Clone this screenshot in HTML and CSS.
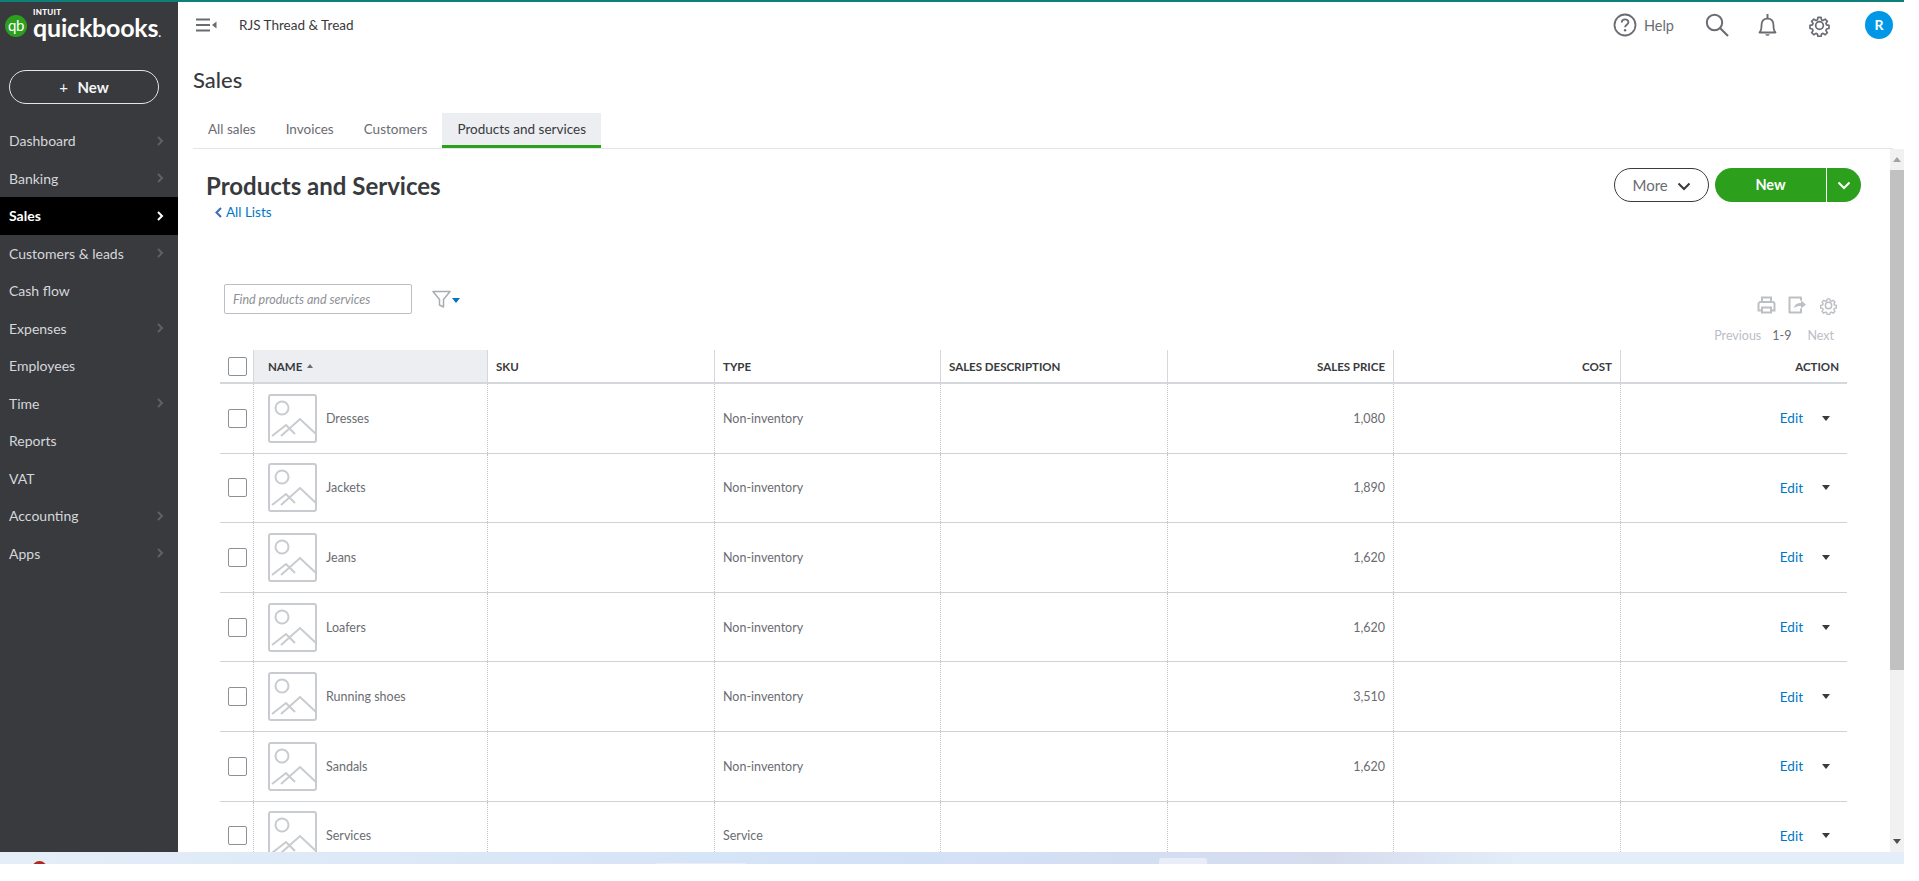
FILE: index.html
```html
<!DOCTYPE html>
<html lang="en">
<head>
    <meta charset="UTF-8">
    <meta name="viewport" content="width=device-width, initial-scale=1.0">
    <title>Products and Services</title>
    <link rel="stylesheet" href="styles.css">
</head>
<body>
    <svg class="defs" width="0" height="0">
        <symbol id="placeholder" viewBox="0 0 49 49">
            <rect x="1" y="1" width="47" height="47" rx="2" fill="none" stroke="#c8cbcf" stroke-width="2"/>
            <circle cx="14" cy="14" r="6.5" fill="none" stroke="#c8cbcf" stroke-width="2"/>
            <path d="M4 42 18 31 27 40M13 42 32 25 48 40" fill="none" stroke="#c8cbcf" stroke-width="2"/>
        </symbol>
        <symbol id="chev" viewBox="0 0 8 12">
            <path d="M2 2l4 4-4 4" fill="none" stroke="currentColor" stroke-width="2"/>
        </symbol>
        <symbol id="down" viewBox="0 0 14 9">
            <path d="M1.5 1.5 7 7l5.500-5.500" fill="none" stroke="currentColor" stroke-width="2"/>
        </symbol>
        <symbol id="gear" viewBox="0 0 24 24">
            <path d="M10 1.500h4l.7 3.200 1.900.8 2.800-1.800 2.800 2.800-1.800 2.800.8 1.900 3.200.7v4l-3.200.7-.8 1.900 1.800 2.800-2.800 2.800-2.800-1.800-1.900.8-.7 3.200h-4l-.7-3.200-1.900-.8-2.800 1.800-2.800-2.800 1.800-2.800-.8-1.900-3.200-.7v-4l3.200-.7.8-1.900-1.800-2.800 2.800-2.800 2.800 1.800 1.900-.8z" transform="translate(2.400 2.400) scale(.8)" fill="none" stroke="currentColor" stroke-width="2.200" stroke-linejoin="round"/>
            <circle cx="12" cy="12" r="4" fill="none" stroke="currentColor" stroke-width="1.800"/>
        </symbol>
    </svg>

    <div class="app">
        <aside class="sidebar">
            <div class="logo">
                <span class="logo-mark">qb</span>
                <div class="logo-text">
                    <span class="logo-intuit">INTUIT</span>
                    <span class="logo-name">quickbooks<small>.</small></span>
                </div>
            </div>
            <button class="new-btn"><span class="plus">+</span> New</button>
            <nav class="nav">
                <a class="nav-item">Dashboard <svg class="nav-chev"><use href="#chev"/></svg></a>
                <a class="nav-item">Banking <svg class="nav-chev"><use href="#chev"/></svg></a>
                <a class="nav-item active">Sales <svg class="nav-chev"><use href="#chev"/></svg></a>
                <a class="nav-item">Customers &amp; leads <svg class="nav-chev"><use href="#chev"/></svg></a>
                <a class="nav-item">Cash flow</a>
                <a class="nav-item">Expenses <svg class="nav-chev"><use href="#chev"/></svg></a>
                <a class="nav-item">Employees</a>
                <a class="nav-item">Time <svg class="nav-chev"><use href="#chev"/></svg></a>
                <a class="nav-item">Reports</a>
                <a class="nav-item">VAT</a>
                <a class="nav-item">Accounting <svg class="nav-chev"><use href="#chev"/></svg></a>
                <a class="nav-item">Apps <svg class="nav-chev"><use href="#chev"/></svg></a>
            </nav>
        </aside>

        <main class="main">
            <header class="topbar">
                <div class="topbar-left">
                    <svg class="menu-icon" width="21" height="14" viewBox="0 0 21 14">
                        <path d="M0 1.500h14M0 7h14M0 12.500h14" stroke="#6b6c72" stroke-width="2"/>
                        <path d="M20.500 3.500v7L16 7z" fill="#6b6c72"/>
                    </svg>
                    <span class="company">RJS Thread &amp; Tread</span>
                </div>
                <div class="topbar-right">
                    <span class="help">
                        <svg width="24" height="24" viewBox="0 0 24 24">
                            <circle cx="12" cy="12" r="10.500" fill="none" stroke="#6b6c72" stroke-width="1.800"/>
                            <path d="M8.800 9.500c0-4.200 6.600-4.200 6.600-.3 0 2.500-3.300 2.600-3.300 5" fill="none" stroke="#6b6c72" stroke-width="1.800"/>
                            <circle cx="12.100" cy="17.300" r="1.200" fill="#6b6c72"/>
                        </svg>
                        Help
                    </span>
                    <svg class="top-icon search" width="24" height="24" viewBox="0 0 24 24">
                        <circle cx="9.500" cy="9.500" r="7.700" fill="none" stroke="#6b6c72" stroke-width="2"/>
                        <path d="M15 15l8 8" stroke="#6b6c72" stroke-width="2.200"/>
                    </svg>
                    <svg class="top-icon bell" width="19" height="24" viewBox="0 0 19 24">
                        <path d="M1.500 19.500c1.800-1.700 2-3.500 2-7 0-4 2-6.800 6-6.800s6 2.800 6 6.800c0 3.500.2 5.300 2 7z" fill="none" stroke="#6b6c72" stroke-width="1.800" stroke-linejoin="round"/>
                        <path d="M9.500 1v4" stroke="#6b6c72" stroke-width="2"/>
                        <path d="M7.300 21.200c.5 2 3.900 2 4.400 0z" fill="#6b6c72"/>
                    </svg>
                    <svg class="top-icon gear" width="23" height="23"><use href="#gear"/></svg>
                    <span class="avatar">R</span>
                </div>
            </header>

            <h1 class="page-title">Sales</h1>

            <div class="tabs">
                <a class="tab">All sales</a>
                <a class="tab">Invoices</a>
                <a class="tab">Customers</a>
                <a class="tab active">Products and services</a>
            </div>

            <div class="content">
                <section class="pane">
                    <div class="list-head">
                        <div>
                            <h2 class="list-title">Products and Services</h2>
                            <a class="back-link"><svg width="7" height="11" viewBox="0 0 7 11"><path d="M6 1 1.500 5.500 6 10" fill="none" stroke="#3f6bb5" stroke-width="2"/></svg> All Lists</a>
                        </div>
                        <div class="head-actions">
                            <button class="more-btn">More <svg width="14" height="9"><use href="#down"/></svg></button>
                            <div class="split-btn">
                                <span class="split-main">New</span>
                                <span class="split-arrow"><svg width="14" height="9"><use href="#down"/></svg></span>
                            </div>
                        </div>
                    </div>

                    <div class="tools">
                        <div class="search-wrap">
                            <input class="search-box" type="text" placeholder="Find products and services">
                            <svg width="19" height="19" viewBox="0 0 19 19">
                                <path d="M1 1.500h17l-6.500 8v7.500l-4-2v-5.500z" fill="none" stroke="#a9adb3" stroke-width="1.500" stroke-linejoin="round"/>
                            </svg>
                            <span class="filter-caret"></span>
                        </div>
                        <div class="tools-right">
                            <div class="tool-icons">
                                <svg width="19" height="18" viewBox="0 0 19 18">
                                    <path d="M5 6V1.500h9V6M4.500 14.500H1.500V8a2 2 0 0 1 2-2h12a2 2 0 0 1 2 2v6.500h-3M5 11.500h9v5H5z" fill="none" stroke="#bcbfc4" stroke-width="2"/>
                                </svg>
                                <svg width="19" height="18" viewBox="0 0 19 18">
                                    <path d="M13 12.500v4H1.500v-15H13v3" fill="none" stroke="#bcbfc4" stroke-width="2" stroke-linejoin="round"/>
                                    <path d="M6 12c.5-3.500 3-5 7-5V4.500l5 4-5 4V10c-3 0-5 .5-7 2z" fill="#bcbfc4"/>
                                </svg>
                                <svg class="tool-gear" width="19" height="19"><use href="#gear"/></svg>
                            </div>
                            <div class="pager">
                                <span>Previous</span>
                                <span class="pager-range">1-9</span>
                                <span>Next</span>
                            </div>
                        </div>
                    </div>

                    <div class="grid">
                        <div class="row head">
                            <div class="cell check"><span class="box"></span></div>
                            <div class="cell sorted">NAME <span class="sort-caret"></span></div>
                            <div class="cell">SKU</div>
                            <div class="cell">TYPE</div>
                            <div class="cell">SALES DESCRIPTION</div>
                            <div class="cell num">SALES PRICE</div>
                            <div class="cell num">COST</div>
                            <div class="cell num">ACTION</div>
                        </div>

                        <div class="row">
                            <div class="cell check"><span class="box"></span></div>
                            <div class="cell name"><svg class="thumb"><use href="#placeholder"/></svg>Dresses</div>
                            <div class="cell"></div>
                            <div class="cell">Non-inventory</div>
                            <div class="cell"></div>
                            <div class="cell num">1,080</div>
                            <div class="cell"></div>
                            <div class="cell action"><a class="edit">Edit</a><span class="row-caret"></span></div>
                        </div>
                        <div class="row">
                            <div class="cell check"><span class="box"></span></div>
                            <div class="cell name"><svg class="thumb"><use href="#placeholder"/></svg>Jackets</div>
                            <div class="cell"></div>
                            <div class="cell">Non-inventory</div>
                            <div class="cell"></div>
                            <div class="cell num">1,890</div>
                            <div class="cell"></div>
                            <div class="cell action"><a class="edit">Edit</a><span class="row-caret"></span></div>
                        </div>
                        <div class="row">
                            <div class="cell check"><span class="box"></span></div>
                            <div class="cell name"><svg class="thumb"><use href="#placeholder"/></svg>Jeans</div>
                            <div class="cell"></div>
                            <div class="cell">Non-inventory</div>
                            <div class="cell"></div>
                            <div class="cell num">1,620</div>
                            <div class="cell"></div>
                            <div class="cell action"><a class="edit">Edit</a><span class="row-caret"></span></div>
                        </div>
                        <div class="row">
                            <div class="cell check"><span class="box"></span></div>
                            <div class="cell name"><svg class="thumb"><use href="#placeholder"/></svg>Loafers</div>
                            <div class="cell"></div>
                            <div class="cell">Non-inventory</div>
                            <div class="cell"></div>
                            <div class="cell num">1,620</div>
                            <div class="cell"></div>
                            <div class="cell action"><a class="edit">Edit</a><span class="row-caret"></span></div>
                        </div>
                        <div class="row">
                            <div class="cell check"><span class="box"></span></div>
                            <div class="cell name"><svg class="thumb"><use href="#placeholder"/></svg>Running shoes</div>
                            <div class="cell"></div>
                            <div class="cell">Non-inventory</div>
                            <div class="cell"></div>
                            <div class="cell num">3,510</div>
                            <div class="cell"></div>
                            <div class="cell action"><a class="edit">Edit</a><span class="row-caret"></span></div>
                        </div>
                        <div class="row">
                            <div class="cell check"><span class="box"></span></div>
                            <div class="cell name"><svg class="thumb"><use href="#placeholder"/></svg>Sandals</div>
                            <div class="cell"></div>
                            <div class="cell">Non-inventory</div>
                            <div class="cell"></div>
                            <div class="cell num">1,620</div>
                            <div class="cell"></div>
                            <div class="cell action"><a class="edit">Edit</a><span class="row-caret"></span></div>
                        </div>
                        <div class="row">
                            <div class="cell check"><span class="box"></span></div>
                            <div class="cell name"><svg class="thumb"><use href="#placeholder"/></svg>Services</div>
                            <div class="cell"></div>
                            <div class="cell">Service</div>
                            <div class="cell"></div>
                            <div class="cell num"></div>
                            <div class="cell"></div>
                            <div class="cell action"><a class="edit">Edit</a><span class="row-caret"></span></div>
                        </div>
                    </div>
                </section>

                <div class="scrollbar">
                    <span class="scroll-up"></span>
                    <span class="scroll-thumb"></span>
                    <span class="scroll-down"></span>
                </div>
            </div>
        </main>
    </div>

    <div class="taskbar">
        <span class="task-red"></span>
        <span class="task-tab wide"></span>
        <span class="task-tab"></span>
    </div>
</body>
</html>
```

FILE: styles.css
```css
:root {
    --teal: #0b7f78;
    --side: #393a3d;
    --green: #2ca01c;
    --blue: #0077c5;
    --text: #393a3d;
    --muted: #6b6c72;
    --line: #d4d7dc;
}

* {
    box-sizing: border-box;
}

html, body {
    margin: 0;
    height: 881px;
    overflow: hidden;
    background: #fff;
}

body {
    font-family: 'Lato', 'Open Sans', sans-serif;
    color: var(--text);
    width: 1919px;
}

.defs {
    position: absolute;
}

.app {
    width: 1904px;
    height: 852px;
    display: flex;
    border-top: 2px solid var(--teal);
    overflow: hidden;
}

/* sidebar */
.sidebar {
    width: 178px;
    flex: none;
    background: var(--side);
    color: #e3e5e8;
}

.logo {
    display: flex;
    align-items: center;
    height: 50px;
    padding: 0 0 2px 5px;
    gap: 6px;
}

.logo-mark {
    width: 22px;
    height: 22px;
    border-radius: 50%;
    background: var(--green);
    color: #fff;
    font-size: 15px;
    line-height: 20px;
    text-align: center;
    letter-spacing: -0.5px;
}

.logo-text {
    display: flex;
    flex-direction: column;
    color: #fff;
}

.logo-intuit {
    font-size: 8px;
    font-weight: 900;
    line-height: 7px;
    letter-spacing: 0.3px;
}

.logo-name {
    font-size: 25px;
    font-weight: 700;
    line-height: 22px;
    letter-spacing: -0.2px;
}

.logo-name small {
    font-size: 12px;
}

.new-btn {
    display: block;
    width: 150px;
    height: 34px;
    margin: 18px 0 0 9px;
    background: transparent;
    border: 1.5px solid #e3e5e8;
    border-radius: 17px;
    color: #f4f5f8;
    font-family: inherit;
    font-size: 15px;
    font-weight: 700;
}

.plus {
    font-weight: 400;
    margin-right: 6px;
}

.nav {
    margin-top: 18px;
}

.nav-item {
    display: flex;
    align-items: center;
    justify-content: space-between;
    height: 37.5px;
    padding: 0 14px 0 9px;
    font-size: 14px;
    color: #d4d7dc;
}

.nav-item.active {
    background: #000;
    color: #fff;
    font-weight: 700;
}

.nav-chev {
    width: 8px;
    height: 12px;
    color: #5f6165;
}

.active .nav-chev {
    color: #fff;
}

/* main */
.main {
    flex: 1;
    min-width: 0;
    display: flex;
    flex-direction: column;
    padding-left: 15px;
}

.topbar {
    height: 46px;
    flex: none;
    display: flex;
    align-items: center;
    justify-content: space-between;
}

.topbar-left {
    display: flex;
    align-items: center;
    padding-left: 3px;
    gap: 22px;
}

.company {
    font-size: 13.500px;
}

.topbar-right {
    display: flex;
    align-items: center;
    padding-right: 11px;
}

.help {
    display: flex;
    align-items: center;
    gap: 7px;
    font-size: 14.500px;
    color: var(--muted);
}

.search {
    margin-left: 31px;
}

.bell {
    margin-left: 29px;
}

.gear {
    margin-left: 31px;
    color: var(--muted);
}

.avatar {
    width: 28px;
    height: 28px;
    margin-left: 34px;
    border-radius: 50%;
    background: #0097e6;
    color: #fff;
    font-size: 14px;
    font-weight: 700;
    line-height: 28px;
    text-align: center;
}

.page-title {
    margin: 16px 0 0;
    font-size: 22px;
    font-weight: 500;
    line-height: 32px;
}

.tabs {
    display: flex;
    height: 36px;
    flex: none;
    margin: 17px 11px 0 0;
    border-bottom: 1px solid #e3e5e8;
    font-size: 13.500px;
    color: var(--muted);
}

.tab {
    padding: 0 15px;
    line-height: 33px;
}

.tab.active {
    height: 35px;
    background: #eceef1;
    border-bottom: 3px solid var(--green);
    color: var(--text);
}

.content {
    flex: 1;
    min-height: 0;
    display: flex;
}

.pane {
    flex: 1;
    min-width: 0;
    padding: 19px 0 0 27px;
    overflow: hidden;
}

.list-head {
    display: flex;
    justify-content: space-between;
    height: 116px;
    margin-left: -14px;
    padding-right: 29px;
}

.list-title {
    margin: 0;
    font-size: 24px;
    font-weight: 700;
    line-height: 36px;
}

.back-link {
    display: flex;
    align-items: center;
    gap: 4px;
    margin-left: 9px;
    font-size: 13.500px;
    line-height: 16px;
    color: var(--blue);
}

.head-actions {
    display: flex;
    gap: 6px;
    height: 34px;
}

.more-btn {
    width: 95px;
    height: 34px;
    background: #fff;
    border: 1px solid var(--text);
    border-radius: 17px;
    color: var(--muted);
    font-family: inherit;
    font-size: 15px;
}

.more-btn svg {
    margin-left: 5px;
    color: var(--text);
}

.split-btn {
    width: 146px;
    display: flex;
    background: var(--green);
    border-radius: 17px;
    color: #fff;
    font-size: 14.500px;
    font-weight: 700;
}

.split-main {
    width: 112px;
    line-height: 33px;
    text-align: center;
    border-right: 1px solid #fff;
}

.split-arrow {
    flex: 1;
    display: flex;
    align-items: center;
    justify-content: center;
}

.tools {
    display: flex;
    justify-content: space-between;
    height: 66px;
    padding: 0 52px 0 4px;
}

.search-wrap {
    display: flex;
    align-items: center;
    height: 30px;
}

.search-box {
    width: 188px;
    height: 30px;
    padding: 0 8px;
    margin-right: 20px;
    border: 1px solid #babec5;
    border-radius: 2px;
    font-family: inherit;
    font-size: 12.500px;
    font-style: italic;
}

.search-box::placeholder {
    color: #8d9096;
}

.filter-caret {
    width: 0;
    height: 0;
    margin: 3px 0 0 1px;
    border: 4px solid transparent;
    border-top: 5px solid var(--blue);
    border-bottom: 0;
}

.tools-right {
    display: flex;
    flex-direction: column;
    align-items: flex-end;
    padding-top: 12px;
}

.tool-icons {
    display: flex;
    gap: 12px;
    height: 18px;
}

.tool-gear {
    color: #bcbfc4;
}

.pager {
    display: flex;
    gap: 11px;
    margin: 13px 4px 0 0;
    font-size: 12.500px;
    line-height: 18px;
    color: #babec5;
}

.pager-range {
    margin-right: 5px;
    color: var(--muted);
}

/* table */
.grid {
    width: 1627px;
}

.row {
    display: grid;
    grid-template-columns: 33px 234px 227px 226px 227px 226px 227px 227px;
    height: 69.6px;
    border-bottom: 1px solid #cfd2d7;
    font-size: 12.500px;
    color: var(--muted);
}

.row.head {
    height: 34px;
    border-bottom: 2px solid var(--line);
    font-size: 11.500px;
    font-weight: 700;
    color: var(--text);
}

.cell {
    display: flex;
    align-items: center;
    padding: 0 8px;
    border-left: 1px dotted #bfc2c6;
}

.head .cell {
    border-left: 1px solid var(--line);
}

.cell.check,
.head .cell.check {
    justify-content: center;
    padding: 0 0 0 1px;
    border-left: 0;
}

.cell.num {
    justify-content: flex-end;
}

.box {
    width: 19px;
    height: 19px;
    border: 1px solid #8d9096;
    border-radius: 2px;
}

.cell.sorted {
    padding-left: 14px;
    gap: 5px;
    background: #eceef1;
}

.sort-caret {
    width: 0;
    height: 0;
    border: 3px solid transparent;
    border-bottom: 4px solid var(--muted);
    border-top: 0;
}

.cell.name {
    padding-left: 14px;
    gap: 9px;
}

.thumb {
    width: 49px;
    height: 49px;
    flex: none;
}

.action {
    justify-content: flex-end;
    padding-right: 17px;
}

.edit {
    font-size: 13.500px;
    color: var(--blue);
}

.row-caret {
    width: 0;
    height: 0;
    margin-left: 19px;
    border: 4.500px solid transparent;
    border-top: 5px solid var(--text);
    border-bottom: 0;
}

.scrollbar {
    width: 14px;
    flex: none;
    display: flex;
    flex-direction: column;
    align-items: center;
    background: #f1f1f1;
    padding-top: 8px;
}

.scroll-up {
    width: 0;
    height: 0;
    border: 4.500px solid transparent;
    border-bottom: 5px solid #a3a3a3;
    border-top: 0;
}

.scroll-thumb {
    width: 100%;
    height: 500px;
    margin-top: 8px;
    background: #c1c1c1;
}

.scroll-down {
    width: 0;
    height: 0;
    margin-top: auto;
    margin-bottom: 8px;
    border: 4.500px solid transparent;
    border-top: 5px solid #505050;
    border-bottom: 0;
}

/* bottom strip */
.taskbar {
    position: relative;
    width: 1904px;
    height: 12px;
    overflow: hidden;
    background: linear-gradient(90deg, #e4eef8 0%, #d3e2f7 45%, #d4def3 60%, #d6dcee 70%, #e3eef9 80%, #e3eef9 100%);
}

.task-red {
    position: absolute;
    left: 32px;
    top: 9px;
    width: 15px;
    height: 15px;
    border-radius: 50%;
    background: #b3261e;
}

.task-tab {
    position: absolute;
    left: 1159px;
    top: 6px;
    width: 48px;
    height: 10px;
    border-radius: 3px 3px 0 0;
    background: #e8edf8;
}

.task-tab.wide {
    left: 655px;
    top: 11px;
    width: 92px;
}
```
